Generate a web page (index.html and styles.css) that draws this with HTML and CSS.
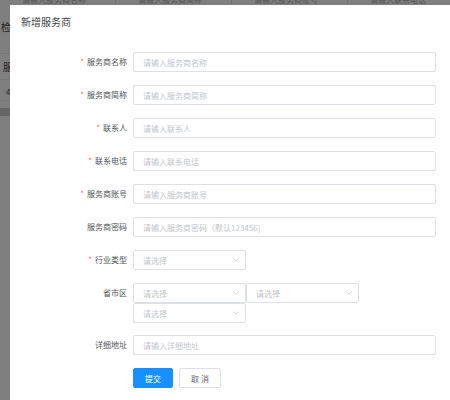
FILE: index.html
```html
<!DOCTYPE html>
<html lang="zh-CN">
<head>
  <meta charset="UTF-8">
  <title>新增服务商</title>
  <link rel="stylesheet" href="styles.css">
</head>
<body>

<!-- 背景列表页 -->
<div class="page">
  <div class="page-head">
    <div class="cell">请输入服务商名称</div>
    <div class="cell">请输入服务商简称</div>
    <div class="cell">请输入服务商账号</div>
    <div class="cell">请输入联系电话</div>
  </div>
  <div class="page-row first">检</div>
  <div class="page-row second">服</div>
  <div class="page-row third">4</div>
  <div class="page-bar"></div>
</div>
<div class="mask"></div>

<!-- 新增服务商弹窗 -->
<div class="dialog">
  <div class="dialog-title">新增服务商</div>

  <div class="form">
    <label class="label required">服务商名称</label>
    <input class="input" placeholder="请输入服务商名称">

    <label class="label required">服务商简称</label>
    <input class="input" placeholder="请输入服务商简称">

    <label class="label required">联系人</label>
    <input class="input" placeholder="请输入联系人">

    <label class="label required">联系电话</label>
    <input class="input" placeholder="请输入联系电话">

    <label class="label required">服务商账号</label>
    <input class="input" placeholder="请输入服务商账号">

    <label class="label">服务商密码</label>
    <input class="input" placeholder="请输入服务商密码（默认123456)">

    <label class="label required">行业类型</label>
    <div class="selects">
      <div class="select"><span>请选择</span><svg viewBox="0 0 8 5"><path d="M0.5 0.5 L4 4 L7.5 0.5"/></svg></div>
    </div>

    <label class="label">省市区</label>
    <div class="selects wrap">
      <div class="select"><span>请选择</span><svg viewBox="0 0 8 5"><path d="M0.5 0.5 L4 4 L7.5 0.5"/></svg></div>
      <div class="select"><span>请选择</span><svg viewBox="0 0 8 5"><path d="M0.5 0.5 L4 4 L7.5 0.5"/></svg></div>
      <div class="select"><span>请选择</span><svg viewBox="0 0 8 5"><path d="M0.5 0.5 L4 4 L7.5 0.5"/></svg></div>
    </div>

    <label class="label">详细地址</label>
    <input class="input" placeholder="请输入详细地址">

    <div></div>
    <div class="buttons">
      <button class="btn primary">提交</button>
      <button class="btn">取 消</button>
    </div>
  </div>
</div>

</body>
</html>
```

FILE: styles.css
```css
body { margin: 0; width: 450px; height: 400px; overflow: hidden; background: #fff; font-family: "Noto Sans CJK SC", "Noto Sans", sans-serif; }

.page { color: #444; font-size: 10px; }
.page-head { display: flex; height: 4px; overflow: hidden; }
.page-head .cell { flex: none; width: 116px; height: 4px; overflow: hidden; border-right: 1px solid #ddd; font-size: 8px; line-height: 0; padding-left: 22px; box-sizing: border-box; color: #aaa; }
.page-row { box-sizing: border-box; border-bottom: 1px solid #eee; }
.page-row.first { height: 50px; line-height: 45px; padding-left: 1px; }
.page-row.second { height: 26px; line-height: 26px; padding-left: 3px; }
.page-row.third { height: 21px; line-height: 24px; padding-left: 6px; font-size: 8px; }
.page-bar { height: 8px; background: #ccc; margin-top: 7px; }

.mask { position: absolute; inset: 0; background: rgba(0, 0, 0, 0.5); }

.dialog { position: absolute; left: 10px; top: 5px; width: 460px; height: 420px; background: #fff; }
.dialog-title { padding: 10px 11px 0; font-size: 10px; line-height: 14px; color: #404246; }

.form { display: grid; grid-template-columns: 117px 303px; column-gap: 6px; row-gap: 13px; margin-top: 23px; }
.label { font-size: 8px; line-height: 20px; color: #505255; text-align: right; }
.required::before { content: "*"; color: #f56c6c; margin-right: 3px; }

.input { box-sizing: border-box; height: 20px; border: 1px solid #dcdfe6; border-radius: 2px; padding: 0 9px; font: 8px "Noto Sans CJK SC", sans-serif; outline: none; }
.input::placeholder { color: #c0c4cc; }

.selects { display: flex; }
.selects.wrap { flex-wrap: wrap; width: 226px; margin-bottom: -1px; }
.select { box-sizing: border-box; width: 113px; height: 20px; border: 1px solid #dcdfe6; border-radius: 2px; display: flex; align-items: center; justify-content: space-between; padding: 0 6px 0 9px; font-size: 8px; color: #c0c4cc; }
.select svg { width: 6px; height: 4px; fill: none; stroke: #c0c4cc; stroke-width: 0.9; }

.buttons { display: flex; gap: 6px; }
.btn { box-sizing: border-box; height: 20px; width: 42px; border: 1px solid #dcdfe6; border-radius: 2px; background: #fff; color: #606266; font: 8px "Noto Sans CJK SC", sans-serif; padding: 0; }
.btn.primary { width: 40px; background: #1890ff; border-color: #1890ff; color: #fff; }
```
